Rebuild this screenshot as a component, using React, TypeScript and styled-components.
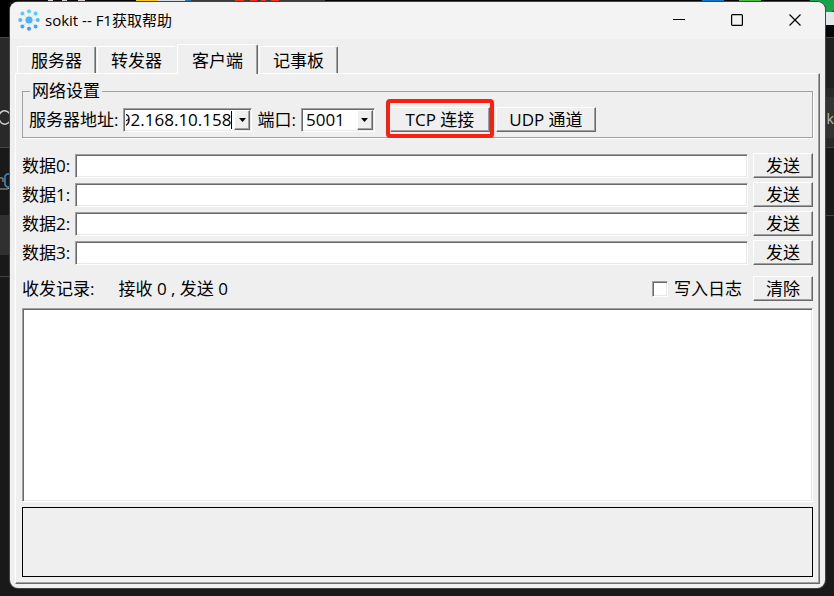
import React, { useState } from "react";
import styled, { createGlobalStyle, css } from "styled-components";

const GlobalStyle = createGlobalStyle`
  * { box-sizing: border-box; }
  html, body, #root { height: 100%; }
  body { margin: 0; overflow: hidden; background: #191919; }
  body, button, input {
    font-family: "Open Sans", "Noto Sans CJK SC", sans-serif;
    font-size: 17px;
    line-height: 22px;
    color: #000;
  }
`;

const font = css`
  font-family: "Open Sans", "Noto Sans CJK SC", sans-serif;
  font-weight: 400;
  font-size: 17px;
  line-height: 22px;
  color: #000;
`;

const raised = css`
  border: 1px solid;
  border-color: #fff #696969 #696969 #fff;
  box-shadow: inset -1px -1px #a0a0a0;
`;

const sunken = css`
  border: 1px solid;
  border-color: #a0a0a0 #fff #fff #a0a0a0;
  box-shadow: inset 1px 1px #696969, inset -1px -1px #e9e9e9;
`;

const Desktop = styled.div`
  position: relative;
  height: 100%;
  min-height: 480px;
  padding: 2px 9px 8px 10px;
  background: #191919;
`;

const Backdrop = styled.svg`
  position: absolute;
  top: 0;
  left: 0;
  width: 100%;
  height: 100%;
`;

const SideBackdrop = styled.svg`
  position: absolute;
  top: 0;
  right: 0;
  width: 24px;
  height: 100%;
`;

const Window = styled.main`
  position: relative;
  display: flex;
  flex-direction: column;
  height: 100%;
  padding-bottom: 4px;
  border-radius: 8px;
  background: #efefef;
  box-shadow: 0 0 0 1px #444;
  overflow: hidden;
`;

const TitleBar = styled.header`
  display: flex;
  align-items: center;
  flex: 0 0 37px;
  padding: 0 1px 1px 8px;
  background: #f3f3f3;
`;

const Title = styled.h1`
  ${font}
  flex: 1;
  margin: 0 0 0 5px;
  font-size: 15px;
`;

const Caption = styled.button`
  display: grid;
  place-items: center;
  width: 58px;
  height: 36px;
  padding: 0;
  border: 0;
  background: transparent;
`;

const Tabs = styled.nav`
  display: flex;
  align-items: flex-end;
  height: 34px;
  padding-left: 7px;
`;

const Tab = styled.button<{ $active: boolean; $edge: boolean }>`
  ${font}
  position: relative;
  width: ${(p) => (p.$active ? 81 : 79)}px;
  height: ${(p) => (p.$active ? 30 : 27)}px;
  margin-bottom: ${(p) => (p.$active ? -1 : 0)}px;
  margin-right: 1px;
  padding: 2px 0 0;
  z-index: ${(p) => (p.$active ? 1 : 0)};
  background: #efefef;
  border: 1px solid;
  border-color: #fff ${(p) => (p.$edge ? "#696969" : "#efefef")} #efefef #fff;
  border-bottom-width: 0;
  border-radius: 2px 2px 0 0;
  box-shadow: ${(p) => (p.$edge ? "inset -1px 0 #a0a0a0" : "none")};
`;

const Pane = styled.section`
  flex: 1;
  min-height: 0;
  display: flex;
  flex-direction: column;
  margin: 0 5px;
  padding: 6px 6px 6px;
  ${raised}
`;

const Group = styled.fieldset`
  display: flex;
  align-items: center;
  min-width: 0;
  margin: 0;
  padding: 3px 6px 3px;
  border: 1px solid #a0a0a0;
  box-shadow: 1px 1px #fff;
`;

const Legend = styled.legend`
  margin-left: 1px;
  padding: 0 2px;
  height: 22px;
`;

const Label = styled.label<{ $gap?: number }>`
  ${font}
  flex: none;
  white-space: nowrap;
  margin-left: ${(p) => p.$gap ?? 0}px;
`;

const Combo = styled.span<{ $width: number }>`
  display: flex;
  align-items: center;
  width: ${(p) => p.$width}px;
  height: 24px;
  margin-left: 5px;
  padding: 1px;
  background: #fff;
  ${sunken}
`;

const ComboInput = styled.input<{ $end?: boolean }>`
  ${font}
  flex: 1;
  min-width: 0;
  height: 20px;
  margin-left: 1px;
  padding: 0 0 0 ${(p) => (p.$end ? 0 : 2)}px;
  border: 0;
  outline: 0;
  background: transparent;
  direction: ${(p) => (p.$end ? "rtl" : "ltr")};
`;

const Caret = styled.i`
  width: 1px;
  height: 18px;
  margin-right: 2px;
  background: #000;
`;

const Arrow = styled.button`
  display: grid;
  place-items: center;
  width: 16px;
  height: 20px;
  padding: 0;
  background: #efefef;
  ${raised}
`;

const Push = styled.button<{ $width: number; $gap?: number }>`
  ${font}
  flex: none;
  width: ${(p) => p.$width}px;
  height: 25px;
  margin-left: ${(p) => p.$gap ?? 0}px;
  padding: 0;
  background: #efefef;
  ${raised}
`;

const Highlight = styled.span`
  display: flex;
  margin: -6px 0 -4px 11px;
  padding: 4px 0 2px;
  border: 4px solid #fd1e12;
  border-radius: 4px;
`;

const Rows = styled.div`
  display: grid;
  gap: 4px;
  margin-top: 15px;
`;

const Row = styled.div`
  display: flex;
  align-items: center;
`;

const DataInput = styled.input`
  ${font}
  flex: 1;
  min-width: 0;
  height: 24px;
  margin: 0 5px;
  padding: 0 4px;
  outline: 0;
  background: #fff;
  ${sunken}
`;

const LogBar = styled.div`
  display: flex;
  align-items: center;
  margin: 11px 0 7px;
`;

const Counter = styled.output`
  flex: 1;
  margin-left: 24px;
`;

const Check = styled.input`
  appearance: none;
  width: 16px;
  height: 16px;
  margin: 0;
  background: #fff;
  ${sunken}
  &:checked { background: #000; background-clip: content-box; padding: 3px; }
`;

const Log = styled.textarea`
  ${font}
  display: block;
  flex: 1;
  min-height: 60px;
  width: 100%;
  padding: 4px;
  resize: none;
  outline: 0;
  background: #fff;
  ${sunken}
`;

const Preview = styled.div`
  flex: 0 0 70px;
  margin-top: 5px;
  border: 1px solid #000;
`;

function Logo() {
  const dots = [
    [10, 2, "#5fd0fb"], [16, 4, "#5bc9fb"], [18, 10, "#52b8fb"], [16, 16, "#46a4fb"],
    [10, 18, "#3e98fb"], [4, 16, "#46a4fb"], [2, 10, "#52b8fb"], [4, 4, "#5bc9fb"],
  ] as const;
  return (
    <svg width="22" height="22" viewBox="0 0 20 20" aria-hidden="true">
      {dots.map(([x, y, c]) => (
        <g key={`${x}-${y}`}>
          <path d={`M10 10L${x} ${y}`} stroke="#b9e1fa" strokeWidth="0.6" />
          <circle cx={x} cy={y} r="1.8" fill={c} />
        </g>
      ))}
      <circle cx="10" cy="10" r="3.2" fill="#4cb3fb" />
    </svg>
  );
}

function ArrowGlyph() {
  return (
    <svg width="7" height="4" viewBox="0 0 7 4" aria-hidden="true">
      <path d="M0 0h7L3.5 4z" fill="#000" />
    </svg>
  );
}

function DesktopArt() {
  return (
    <>
      <Backdrop aria-hidden="true">
        <path d="M0 0H834V2H0z" fill="#050505" />
        <path d="M0 0H10V37H0z" fill="#000" />
        <path d="M0 37H10V147H0z" fill="#292929" />
        <path d="M0 215H10V255H0z" fill="#303030" />
        <path d="M0 37.5H10M0 147.5H10M0 276.5H10" stroke="#444" />
        <path d="M48 0h5v2h-5zM62 0h5v2h-5zM78 0h7v2h-7z" fill="#d8c8d0" />
        <path d="M136 0h21v2h-21z" fill="#f5c52b" />
        <path d="M157 0h28v2h-28z" fill="#d8dde2" />
        <path d="M185 0h6v2h-6z" fill="#2f75b5" />
        <path d="M191 0h134v2H191z" fill="#3a3a3a" />
        <path d="M235 0h9v2h-9zM250 0h7v2h-7zM261 0h5v2h-5zM271 0h8v2h-8z" fill="#e8341c" />
        <path d="M702 0h22v2h-22z" fill="#1273c9" />
        <path d="M739 0h22v2h-22z" fill="#4db848" />
        <path d="M10 114Q7 110 3 111Q-2 113-1 119Q1 125 6 124Q9 123 10 121" fill="none" stroke="#ccc" strokeWidth="1.5" />
        <path d="M0 178h3v4M0 189h7l3-1" fill="none" stroke="#aaa" />
        <path d="M10 174H7l-2 2v9l2 2h3" fill="none" stroke="#3b92c4" strokeWidth="1.5" />
      </Backdrop>
      <SideBackdrop aria-hidden="true">
        <path d="M12 12h12v13H12z" fill="#e4e7e9" />
        <path d="M0 0h24v9q0 3-3 3h-7L0 2z" fill="#16a34a" />
        <path d="M14 25h10v12H14z" fill="#050505" />
        <path d="M14 37h10v51H14z" fill="#202020" />
        <path d="M14 88h10v59H14z" fill="#292929" />
        <path d="M14 97h10v41H14z" fill="#333" />
        <path d="M14 37.5h10M14 147.5h10M14 215.5h10" stroke="#444" />
        <text x="8" y="124" fill="#bbb" fontFamily="Open Sans, sans-serif" fontSize="14">ok</text>
      </SideBackdrop>
    </>
  );
}

const tabs = ["服务器", "转发器", "客户端", "记事板"];

export default function App() {
  const [active, setActive] = useState(2);
  return (
    <>
      <GlobalStyle />
      <Desktop>
        <DesktopArt />
        <Window>
          <TitleBar>
            <Logo />
            <Title>sokit -- F1获取帮助</Title>
            <Caption aria-label="Minimize">
              <svg width="12" height="12"><path d="M0 5.5h12" stroke="#000" /></svg>
            </Caption>
            <Caption aria-label="Maximize">
              <svg width="12" height="12"><rect x=".6" y=".6" width="10.8" height="10.8" rx="1" fill="none" stroke="#000" strokeWidth="1.2" /></svg>
            </Caption>
            <Caption aria-label="Close">
              <svg width="12" height="12"><path d="M.5.5l11 11M11.5.5l-11 11" stroke="#000" strokeWidth="1.2" /></svg>
            </Caption>
          </TitleBar>
          <Tabs role="tablist">
            {tabs.map((name, i) => (
              <Tab key={name} role="tab" aria-selected={i === active} $active={i === active} $edge={i + 1 !== active} onClick={() => setActive(i)}>
                {name}
              </Tab>
            ))}
          </Tabs>
          <Pane>
            <Group>
              <Legend>网络设置</Legend>
              <Label htmlFor="address">服务器地址:</Label>
              <Combo $width={129}>
                <ComboInput id="address" $end defaultValue="192.168.10.158" />
                <Caret />
                <Arrow aria-label="服务器地址"><ArrowGlyph /></Arrow>
              </Combo>
              <Label htmlFor="port" $gap={5}>端口:</Label>
              <Combo $width={74}>
                <ComboInput id="port" defaultValue="5001" />
                <Arrow aria-label="端口"><ArrowGlyph /></Arrow>
              </Combo>
              <Highlight><Push $width={100}>TCP 连接</Push></Highlight>
              <Push $width={100} $gap={2}>UDP 通道</Push>
            </Group>
            <Rows>
              {[0, 1, 2, 3].map((n) => (
                <Row key={n}>
                  <Label htmlFor={`data${n}`}>数据{n}:</Label>
                  <DataInput id={`data${n}`} />
                  <Push $width={60}>发送</Push>
                </Row>
              ))}
            </Rows>
            <LogBar>
              <Label htmlFor="log">收发记录:</Label>
              <Counter>接收 0 , 发送 0</Counter>
              <Check type="checkbox" id="write" />
              <Label htmlFor="write" $gap={6}>写入日志</Label>
              <Push $width={60} $gap={11}>清除</Push>
            </LogBar>
            <Log id="log" readOnly />
            <Preview />
          </Pane>
        </Window>
      </Desktop>
    </>
  );
}
